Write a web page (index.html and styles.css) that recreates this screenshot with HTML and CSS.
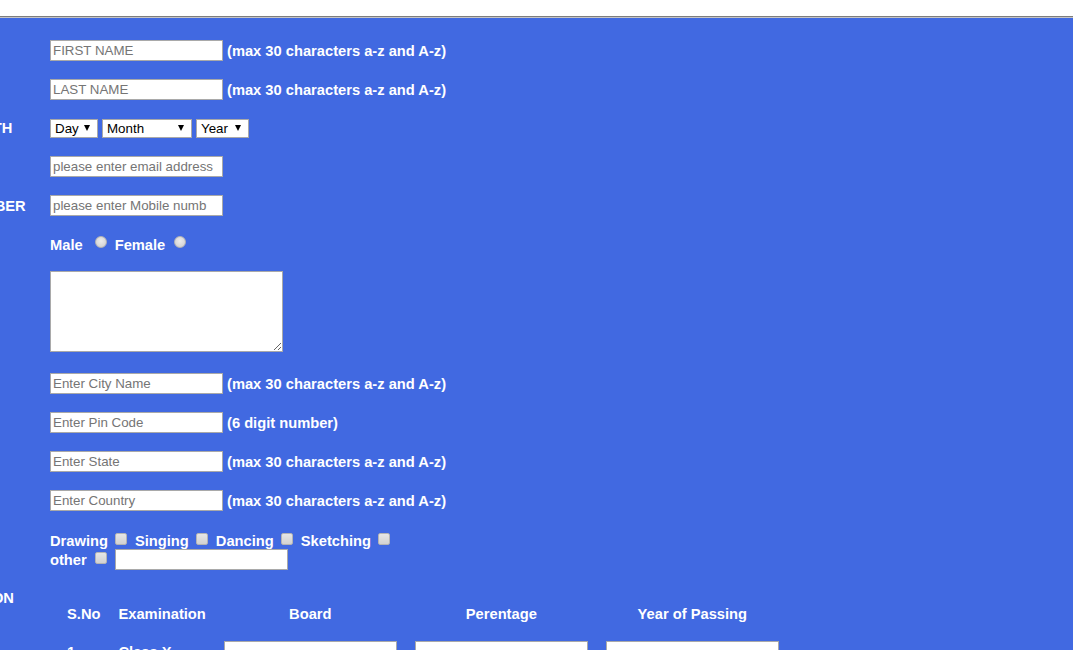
FILE: index.html
```html
<!DOCTYPE html>
<html>
<head>
<meta charset="utf-8">
<title>Registration Form</title>
<link rel="stylesheet" href="styles.css">
</head>
<body>
<div class="topbar"></div>
<div class="page">
  <form class="form">
    <div class="row">
      <div class="label">FIRST NAME</div>
      <div class="field"><input class="txt" type="text" placeholder="FIRST NAME"><span class="hint">(max 30 characters a-z and A-z)</span></div>
    </div>
    <div class="row">
      <div class="label">LAST NAME</div>
      <div class="field"><input class="txt" type="text" placeholder="LAST NAME"><span class="hint">(max 30 characters a-z and A-z)</span></div>
    </div>
    <div class="row row-dob">
      <div class="label">DATE OF BIRTH</div>
      <div class="field">
        <span class="sel sel-day"><select><option>Day</option><option>1</option><option>2</option></select></span>
        <span class="sel sel-month"><select><option>Month</option><option>Jan</option><option>Feb</option></select></span>
        <span class="sel sel-year"><select><option>Year</option><option>2000</option><option>2001</option></select></span>
      </div>
    </div>
    <div class="row">
      <div class="label">EMAIL ID</div>
      <div class="field"><input class="txt" type="text" placeholder="please enter email address"></div>
    </div>
    <div class="row">
      <div class="label">MOBILE NUMBER</div>
      <div class="field"><input class="txt" type="text" placeholder="please enter Mobile numb"></div>
    </div>
    <div class="row">
      <div class="label">GENDER</div>
      <div class="field gender">
        <span class="opt">Male</span><input class="radio radio-male" type="radio" name="g">
        <span class="opt">Female</span><input class="radio radio-female" type="radio" name="g">
      </div>
    </div>
    <div class="row row-address">
      <div class="label">ADDRESS</div>
      <div class="field field-top"><textarea class="area"></textarea></div>
    </div>
    <div class="row">
      <div class="label">CITY</div>
      <div class="field"><input class="txt" type="text" placeholder="Enter City Name"><span class="hint">(max 30 characters a-z and A-z)</span></div>
    </div>
    <div class="row">
      <div class="label">PIN CODE</div>
      <div class="field"><input class="txt" type="text" placeholder="Enter Pin Code"><span class="hint">(6 digit number)</span></div>
    </div>
    <div class="row">
      <div class="label">STATE</div>
      <div class="field"><input class="txt" type="text" placeholder="Enter State"><span class="hint">(max 30 characters a-z and A-z)</span></div>
    </div>
    <div class="row">
      <div class="label">COUNTRY</div>
      <div class="field"><input class="txt" type="text" placeholder="Enter Country"><span class="hint">(max 30 characters a-z and A-z)</span></div>
    </div>
    <div class="row row-hobby">
      <div class="label label-top">HOBBIES</div>
      <div class="field-stack">
        <div class="hline">
          <span class="opt">Drawing</span><input class="check" type="checkbox">
          <span class="opt">Singing</span><input class="check" type="checkbox">
          <span class="opt">Dancing</span><input class="check" type="checkbox">
          <span class="opt">Sketching</span><input class="check" type="checkbox">
        </div>
        <div class="hline">
          <span class="opt">other</span><input class="check check-other" type="checkbox"><input class="txt" type="text">
        </div>
      </div>
    </div>
    <div class="row row-qual">
      <div class="label label-top">QUALIFICATION</div>
      <div class="field-stack">
        <table class="qual">
          <thead>
            <tr><th class="c-sno">S.No</th><th class="c-exam">Examination</th><th>Board</th><th>Perentage</th><th>Year of Passing</th></tr>
          </thead>
          <tbody>
            <tr><td>1</td><td>Class X</td><td><input class="txt" type="text"></td><td><input class="txt" type="text"></td><td><input class="txt" type="text"></td></tr>
            <tr><td>2</td><td>Class XII</td><td><input class="txt" type="text"></td><td><input class="txt" type="text"></td><td><input class="txt" type="text"></td></tr>
            <tr><td>3</td><td>Graduation</td><td><input class="txt" type="text"></td><td><input class="txt" type="text"></td><td><input class="txt" type="text"></td></tr>
            <tr><td>4</td><td>Masters</td><td><input class="txt" type="text"></td><td><input class="txt" type="text"></td><td><input class="txt" type="text"></td></tr>
          </tbody>
        </table>
      </div>
    </div>
  </form>
</div>
</body>
</html>
```
FILE: styles.css
```css
html, body {
  margin: 0;
  padding: 0;
  overflow: hidden;
  background: #ffffff;
}

body {
  font-family: "Liberation Sans", Arial, sans-serif;
}

.topbar {
  height: 16px;
  background: #ffffff;
  border-bottom: 1px solid #7d7d7d;
}

.page {
  background: #4169e1;
  border-top: 1px solid #c4c4c4;
  padding-top: 13px;
  min-height: 700px;
  color: #ffffff;
  font-weight: bold;
  font-size: 14.7px;
}

.form {
  margin: 0 0 0 -100px;
  width: 1300px;
}

.row {
  display: grid;
  grid-template-columns: 150px 1fr;
  align-items: center;
  height: 39px;
}

.row-dob {
  height: 38px;
}

.row-address {
  height: 100px;
  align-items: start;
}

.row-hobby {
  height: 69px;
  align-items: start;
}

.row-qual {
  align-items: start;
  height: 300px;
}

.label {
  white-space: nowrap;
  line-height: 18px;
}

.row-hobby .label-top {
  padding-top: 11px;
}

.field {
  display: flex;
  align-items: center;
  gap: 4px;
}

.field-top {
  padding-top: 7px;
}

.txt {
  box-sizing: border-box;
  width: 173px;
  height: 21px;
  margin: 0;
  padding: 1px 2px;
  border: 1px solid #a9a9a9;
  background: #ffffff;
  font-family: "Liberation Sans", Arial, sans-serif;
  font-size: 13.33px;
  color: #000000;
  outline: none;
}

.txt::placeholder {
  color: #757575;
}

.hint {
  white-space: nowrap;
}

/* selects */
.sel {
  position: relative;
  display: inline-block;
  height: 19px;
}

.sel select {
  appearance: none;
  -webkit-appearance: none;
  box-sizing: border-box;
  height: 19px;
  margin: 0;
  padding: 0 0 0 4px;
  border: 1px solid #a9a9a9;
  border-radius: 0;
  background: #ffffff;
  font-family: "Liberation Sans", Arial, sans-serif;
  font-size: 13.33px;
  color: #000000;
  line-height: 17px;
}

.sel::after {
  content: "";
  position: absolute;
  right: 8px;
  top: 6px;
  border-top: 6px solid #000000;
  border-left: 3px solid transparent;
  border-right: 3px solid transparent;
  pointer-events: none;
}

.sel-day select { width: 48px; }
.sel-month select { width: 90px; }
.sel-year select { width: 53px; }

/* gender */
.gender {
  gap: 0;
}

.opt {
  white-space: nowrap;
}

.radio {
  appearance: none;
  -webkit-appearance: none;
  box-sizing: border-box;
  width: 12px;
  height: 12px;
  margin: 0 8px 5px 9px;
  border: 1px solid #b4b4b4;
  border-radius: 50%;
  background: radial-gradient(circle at 50% 40%, #ececec 0%, #d6d6d6 70%, #cfcfcf 100%);
}

.radio-male {
  margin-left: 12px;
}

/* address */
.area {
  box-sizing: border-box;
  width: 233px;
  height: 81px;
  margin: 0;
  padding: 2px;
  border: 1px solid #a9a9a9;
  background: #ffffff;
  display: block;
  font-family: "Liberation Mono", monospace;
  font-size: 13.33px;
}

/* hobbies */
.field-stack {
  display: flex;
  flex-direction: column;
  align-items: flex-start;
}

.row-hobby .field-stack {
  padding-top: 11px;
}

.hline {
  display: flex;
  align-items: center;
  height: 19px;
}

.check {
  appearance: none;
  -webkit-appearance: none;
  box-sizing: border-box;
  width: 12px;
  height: 12px;
  margin: 0 8px 4px 7px;
  border: 1px solid #b4b4b4;
  border-radius: 2px;
  background: linear-gradient(#e6e6e6, #d2d2d2);
}

.check-other {
  margin: 0 8px 3px 8px;
}

/* qualification table */
.qual {
  margin: 14px 0 0 8px;
  border-collapse: separate;
  border-spacing: 0;
  color: #ffffff;
  font-size: 14.7px;
  font-weight: bold;
}

.qual th {
  height: 29px;
  box-sizing: border-box;
  padding: 3px 9px 9px;
  line-height: 17px;
  vertical-align: top;
  text-align: center;
  white-space: nowrap;
}

.qual th.c-sno { width: 33px; text-align: left; }
.qual th.c-exam { width: 88px; text-align: left; }

.qual td {
  height: 39px;
  padding: 0 9px;
  vertical-align: middle;
  white-space: nowrap;
}

.qual td .txt {
  display: block;
}
```
